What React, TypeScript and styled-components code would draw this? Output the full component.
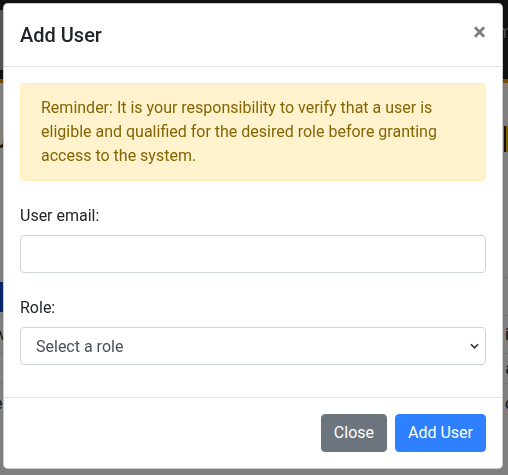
import React from "react";
import styled, { createGlobalStyle } from "styled-components";

const Global = createGlobalStyle`
  html, body { margin: 0; padding: 0; }
  body {
    font-family: Roboto, "Liberation Sans", Arial, sans-serif;
    font-size: 16px;
    line-height: 1.5;
    color: #212529;
    background: #fff;
    overflow: hidden;
  }
  * { box-sizing: border-box; }
`;

/* ---------- page behind the modal ---------- */
const Page = styled.div`
  width: 508px;
  height: 475px;
  overflow: hidden;
`;

const Navbar = styled.nav`
  height: 83px;
  background: #222;
  border-bottom: 4px solid #f29200;
  display: flex;
  align-items: center;
  justify-content: space-between;
`;

const NavSide = styled.div`
  width: 6px;
  height: 60px;
  background: #aaa;
`;

const NavLink = styled.span`
  color: rgba(255, 255, 255, 0.55);
  font-size: 18px;
  margin-right: -14px;
  margin-top: -16px;
`;

const Main = styled.main`
  padding: 36px 0 0;
`;

const TitleRow = styled.div`
  display: flex;
  justify-content: space-between;
  align-items: center;
  height: 40px;
`;

const PageTitle = styled.h2`
  margin: 0 0 0 -10px;
  font-size: 28px;
  font-weight: 500;
  color: #4a3200;
`;

const WarnButton = styled.span`
  width: 20px;
  height: 26px;
  margin-right: -16px;
  background: #ffc107;
  border-left: 2px solid #2a2000;
`;

const Table = styled.div`
  margin-top: 118px;
  display: flex;
  flex-direction: column;
`;

const TRow = styled.div<{ $h: number }>`
  height: ${(p) => p.$h}px;
  border-top: 1px solid #dee2e6;
  display: flex;
  justify-content: space-between;
  align-items: center;
  font-size: 16px;
  color: #212529;
`;

const BlueTag = styled.span`
  width: 8px;
  height: 30px;
  background: #0d4bd0;
`;

const Frag = styled.span<{ $l?: number; $r?: number }>`
  margin-left: ${(p) => p.$l ?? 0}px;
  margin-right: ${(p) => p.$r ?? 0}px;
`;

/* ---------- modal ---------- */
const Backdrop = styled.div`
  position: fixed;
  inset: 0;
  background: rgba(0, 0, 0, 0.5);
`;

const ModalContent = styled.div`
  position: fixed;
  top: 3px;
  left: 3px;
  width: 500px;
  background: #fff;
  border: 1px solid rgba(0, 0, 0, 0.2);
  border-radius: 4.8px;
  display: flex;
  flex-direction: column;
`;

const ModalHeader = styled.div`
  display: flex;
  align-items: flex-start;
  justify-content: space-between;
  padding: 16px;
  border-bottom: 1px solid #dee2e6;
`;

const ModalTitle = styled.h5`
  margin: 0;
  font-size: 20px;
  font-weight: 500;
  line-height: 1.5;
  color: #212529;
`;

const CloseX = styled.button`
  border: 0;
  background: transparent;
  padding: 16px;
  margin: -16px -16px -16px auto;
  font-family: Roboto, "Liberation Sans", Arial, sans-serif;
  font-size: 24px;
  font-weight: 700;
  line-height: 1;
  color: #000;
  opacity: 0.5;
  text-shadow: 0 1px 0 #fff;
  cursor: pointer;
`;

const ModalBody = styled.div`
  padding: 16px;
`;

const Alert = styled.div`
  padding: 12px 20px;
  margin-bottom: 16px;
  background: #fff3cd;
  border: 1px solid #ffeeba;
  border-radius: 4px;
  color: #856404;
  line-height: 24px;
`;

const FormGroup = styled.div`
  margin-bottom: 16px;
`;

const Label = styled.label`
  display: block;
  padding-top: 7px;
  margin-bottom: 7px;
  color: #212529;
`;

const Input = styled.input`
  display: block;
  width: 100%;
  height: 38px;
  padding: 6px 12px;
  font-family: inherit;
  font-size: 16px;
  color: #495057;
  background: #fff;
  border: 1px solid #ced4da;
  border-radius: 4px;
  outline: none;
`;

const Select = styled.select`
  display: block;
  width: 100%;
  height: 38px;
  padding: 6px 30px 6px 15px;
  font-family: inherit;
  font-size: 16px;
  color: #495057;
  background-color: #fff;
  background-image: url("data:image/svg+xml,%3Csvg xmlns='http://www.w3.org/2000/svg' width='10' height='6' viewBox='0 0 10 6'%3E%3Cpath d='M1 1l4 4 4-4' fill='none' stroke='%23333' stroke-width='1.8'/%3E%3C/svg%3E");
  background-repeat: no-repeat;
  background-position: right 6px center;
  background-size: 9px 6px;
  border: 1px solid #ced4da;
  border-radius: 4px;
  appearance: none;
  outline: none;
`;

const ModalFooter = styled.div`
  display: flex;
  justify-content: flex-end;
  align-items: center;
  padding: 12px;
  border-top: 1px solid #dee2e6;
`;

const Btn = styled.button<{ $variant: "secondary" | "primary" }>`
  margin: 4px;
  height: 38px;
  padding: 6px 12px;
  font-family: inherit;
  font-size: 16px;
  line-height: 24px;
  color: #fff;
  border: 1px solid ${(p) => (p.$variant === "primary" ? "#2f80ff" : "#6c757d")};
  background: ${(p) => (p.$variant === "primary" ? "#2f80ff" : "#6c757d")};
  border-radius: 4px;
  cursor: pointer;
`;

export default function App() {
  return (
    <>
      <Global />
      <Page>
        <Navbar>
          <NavSide />
          <NavLink>Home</NavLink>
        </Navbar>
        <Main>
          <TitleRow>
            <PageTitle>Users</PageTitle>
            <WarnButton />
          </TitleRow>
          <Table>
            <TRow $h={38}>
              <BlueTag />
            </TRow>
            <TRow $h={38}>
              <Frag $l={-6}>w</Frag>
              <Frag $r={-6}>it</Frag>
            </TRow>
            <TRow $h={30}>
              <span />
              <Frag $r={-6}>a</Frag>
            </TRow>
            <TRow $h={40}>
              <Frag $l={-6}>e</Frag>
              <Frag $r={-6}>o</Frag>
            </TRow>
          </Table>
        </Main>
      </Page>
      <Backdrop />
      <ModalContent role="dialog">
        <ModalHeader>
          <ModalTitle>Add User</ModalTitle>
          <CloseX aria-label="Close">×</CloseX>
        </ModalHeader>
        <ModalBody>
          <Alert>
            Reminder: It is your responsibility to verify that a user is eligible and
            qualified for the desired role before granting access to the system.
          </Alert>
          <FormGroup>
            <Label htmlFor="email">User email:</Label>
            <Input id="email" type="email" />
          </FormGroup>
          <FormGroup>
            <Label htmlFor="role">Role:</Label>
            <Select id="role" defaultValue="">
              <option value="">Select a role</option>
              <option value="admin">Admin</option>
              <option value="user">User</option>
            </Select>
          </FormGroup>
        </ModalBody>
        <ModalFooter>
          <Btn $variant="secondary">Close</Btn>
          <Btn $variant="primary">Add User</Btn>
        </ModalFooter>
      </ModalContent>
    </>
  );
}
